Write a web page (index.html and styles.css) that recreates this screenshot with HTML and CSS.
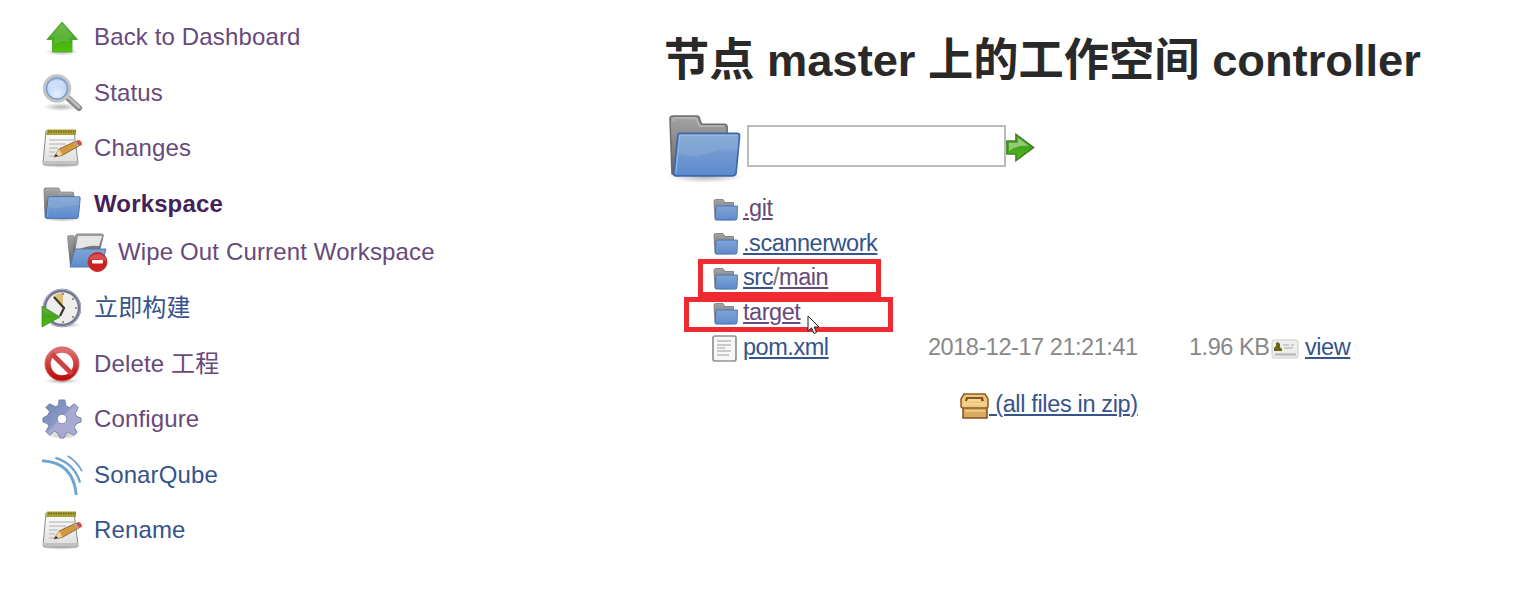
FILE: index.html
```html
<!DOCTYPE html>
<html lang="zh-CN">
<head>
<meta charset="utf-8">
<title>Workspace</title>
<link rel="stylesheet" href="styles.css">
</head>
<body>
<svg class="defs" width="0" height="0" aria-hidden="true">
  <defs>
    <linearGradient id="green" x1="0" y1="0" x2="0" y2="1"><stop offset="0" stop-color="#62b23c"/><stop offset=".5" stop-color="#43a51f"/><stop offset="1" stop-color="#4fc400"/></linearGradient>
    <linearGradient id="blue" x1="0" y1="0" x2="0" y2="1"><stop offset="0" stop-color="#7ea5d6"/><stop offset=".5" stop-color="#7199d0"/><stop offset="1" stop-color="#5c8ad0"/></linearGradient>
    <linearGradient id="grey" x1="0" y1="0" x2="0" y2="1"><stop offset="0" stop-color="#a4a4a4"/><stop offset="1" stop-color="#646464"/></linearGradient>
    <linearGradient id="paper" x1="0" y1="0" x2="0" y2="1"><stop offset="0" stop-color="#fff"/><stop offset="1" stop-color="#dcdcdc"/></linearGradient>
    <linearGradient id="red" x1="0" y1="0" x2="0" y2="1"><stop offset="0" stop-color="#dc6e6e"/><stop offset="1" stop-color="#c00c0c"/></linearGradient>
    <linearGradient id="steel" x1="0" y1="0" x2="1" y2="1"><stop offset="0" stop-color="#6e88b8"/><stop offset=".45" stop-color="#8898c4"/><stop offset=".5" stop-color="#a8aad4"/><stop offset="1" stop-color="#aaa8ce"/></linearGradient>
    <radialGradient id="lens" cx=".5" cy=".7" r=".7"><stop offset="0" stop-color="#e4f0ff"/><stop offset="1" stop-color="#a5c2ee"/></radialGradient>
    <radialGradient id="shade"><stop offset="0" stop-color="#777" stop-opacity=".55"/><stop offset="1" stop-color="#777" stop-opacity="0"/></radialGradient>
    <symbol id="folder" viewBox="0 0 76 68" preserveAspectRatio="none">
      <ellipse cx="38" cy="62" rx="38" ry="6" fill="url(#shade)"/>
      <path d="M4 59 2 5Q2 2 5 2H29Q32 2 32 5L34 10H57Q60 10 60 13V30L10 61Z" fill="url(#grey)" stroke="#6c6c6c" stroke-width="1.5"/>
      <path d="M5 7Q5 4 8 4H28L32 12H57" fill="none" stroke="#bdbdbd" stroke-width="1.2"/>
      <path d="M12 19H70Q73 19 72.500 22L69 58Q68.500 61 65 61H8Q5 61 6 57L10 21Q10 19 12 19Z" fill="url(#blue)" stroke="#3d68aa" stroke-width="1.7"/>
      <path d="M11 39C34 48 45 31 71 36L70 21H13Z" fill="#a9bfdf" opacity=".24"/>
      <path d="M8 58 12 21H70" fill="none" stroke="#9fbbe1" stroke-width="1"/>
    </symbol>
    <symbol id="folder-small" viewBox="0 0 26 24">
      <ellipse cx="13" cy="22" rx="12" ry="1.500" fill="url(#shade)"/>
      <path d="M2 21 1 3Q1 1.500 2.500 1.500H10L12 4.500H20.500V10L4 22Z" fill="url(#grey)" stroke="#747474" stroke-width=".8"/>
      <path d="M4 8H24.500L24 20.500Q24 22 22.500 22H3Q2 22 2.300 20.500L3 9Z" fill="url(#blue)" stroke="#4a73af" stroke-width=".9"/>
    </symbol>
    <symbol id="notepad" viewBox="0 0 42 40">
      <ellipse cx="20" cy="37" rx="20" ry="3" fill="url(#shade)"/>
      <path d="M5 3H33L37 35Q37 37 35 37H4Q2 37 2 35Z" fill="url(#paper)" stroke="#8b8b8b"/>
      <path d="M2 33H37V36H2Z" fill="#c2c2c2"/>
      <path d="M6 1.500H35V7H5Z" fill="#aaa039"/>
      <path d="M7 3.500H35" stroke="#756b18" stroke-width="2" stroke-dasharray="1.500 1"/>
      <path d="M8 12H33M8 16H25M8 20H17M8 24H14M8 28H14" stroke="#c5c5c5" stroke-width="1.500"/>
      <path d="M13 29 18 21 34 13.500 38 18 21 27.500Z" fill="#d29a3c" stroke="#80592b" stroke-width=".8"/>
      <path d="M13 29 18 21 21.500 27Z" fill="#ead3a0"/><path d="m13 29 2-3 2 2Z" fill="#2f2b25"/>
      <path d="m33 14 3-1.500 3 4.500-2.500 2Z" fill="#aaa"/><path d="m35 13 3-1q3 1 3 5l-3 1Z" fill="#d64e49"/>
    </symbol>
  </defs>
</svg>

<div class="page">
  <nav class="side">
    <a class="task visited"><svg class="icon" viewBox="0 0 42 40"><ellipse cx="21" cy="35" rx="17" ry="3.500" fill="url(#shade)"/><path d="M21 5 36.500 22.500H31V35H11.500V22.500H6Z" fill="url(#green)" stroke="#57a83c"/><path d="M21 7 33 20.500H28V25Q21 22 13.500 28V20.500H9Z" fill="#91cf70" opacity=".32"/></svg><span>Back to Dashboard</span></a>
    <a class="task visited"><svg class="icon" viewBox="0 0 42 40"><ellipse cx="20" cy="34" rx="18" ry="4" fill="url(#shade)"/><path d="m27 25 11 10" stroke="#888" stroke-width="6" stroke-linecap="round"/><path d="m27 24 11 10" stroke="#c0c0c0" stroke-width="3" stroke-linecap="round"/><circle cx="16" cy="15.500" r="12.500" fill="url(#lens)" stroke="#c2c5c6" stroke-width="3.500"/><circle cx="16" cy="15.500" r="10.500" fill="none" stroke="#7f9cc9" stroke-width="1.500"/><path d="M7 16Q6 7 17 7 24 8 24 13 16 11 7 16Z" fill="#dbe9ff" opacity=".5"/></svg><span>Status</span></a>
    <a class="task visited"><svg class="icon"><use href="#notepad"/></svg><span>Changes</span></a>
    <a class="task visited current"><svg class="icon folder-icon"><use href="#folder"/></svg><span>Workspace</span></a>
    <a class="task visited sub"><svg class="icon" viewBox="0 0 42 40"><path d="M1 5Q1 3 3 3H8V33H4Z" fill="url(#grey)"/><path d="M9 4Q10 2 12 2H36Q38 2 37 5L33 21H6Z" fill="url(#grey)" stroke="#858585"/><path d="M12 4H36L33 14Q21 13 9 19Z" fill="#e6e6e6"/><path d="M9 17H40L35 35H4Z" fill="url(#blue)" stroke="#4f78b0"/><circle cx="31.500" cy="30" r="9.500" fill="#cf2020" stroke="#bd3333"/><path d="M23 28Q25 22 32 22 39 22 40 29 31 26 23 28Z" fill="#e07979" opacity=".55"/><rect x="26" y="28" width="11" height="3.500" rx="1" fill="#fff"/></svg><span>Wipe Out Current Workspace</span></a>
    <a class="task"><svg class="icon" viewBox="0 0 42 40"><ellipse cx="24" cy="37" rx="17" ry="3" fill="url(#shade)"/><circle cx="21" cy="20" r="17.500" fill="#eeeeec" stroke="#747792" stroke-width="3.500"/><circle cx="21" cy="20" r="18.600" fill="none" stroke="#adb0c6" stroke-width="1"/><path d="M22 18 12 9Q16 5 22 5Z" fill="#ddc270"/><path d="m13 9 10 11-4 8" fill="none" stroke="#39362b" stroke-width="2.200"/><g fill="#777"><circle cx="22" cy="6" r="1"/><circle cx="32" cy="11" r="1"/><circle cx="35" cy="20" r="1"/><circle cx="32" cy="29" r="1"/><circle cx="22" cy="34" r="1"/></g><path d="M1 18 19 29 1 39Z" fill="url(#green)" stroke="#4a8732" stroke-width=".8"/></svg><span>立即构建</span></a>
    <a class="task visited"><svg class="icon" viewBox="0 0 42 40"><ellipse cx="21" cy="37" rx="18" ry="3" fill="url(#shade)"/><circle cx="21" cy="20" r="14" fill="#fff" stroke="url(#red)" stroke-width="5.500"/><path d="m11 10 20 20" stroke="#ce3f3f" stroke-width="5"/><circle cx="21" cy="20" r="17" fill="none" stroke="#bd3939" stroke-width=".8"/></svg><span>Delete 工程</span></a>
    <a class="task visited"><svg class="icon" viewBox="0 0 42 42"><ellipse cx="22" cy="38" rx="17" ry="4" fill="url(#shade)"/><path fill-rule="evenodd" d="M18 1H24L25 7 29 9 34 5 38 9 35 15 36 18 41 20V24L36 26 34 30 37 35 33 38 28 35 25 36 23 41H19L17 36 13 34 8 38 4 34 7 29 6 26 1 24V20L6 17 8 13 4 9 8 5 14 8 17 7ZM21 16a5 5 0 1 0 .1 0Z" fill="url(#steel)" stroke="#7783a5"/></svg><span>Configure</span></a>
    <a class="task"><svg class="icon" viewBox="0 0 42 42" fill="none" stroke="#6da4d0"><path d="M0 6C22 7 34 19 36 42" stroke-width="3"/><path d="M14 3C28 7 36 16 40 29" stroke-width="2.400"/><path d="M27 1Q37 7 42 17" stroke-width="1.900"/></svg><span>SonarQube</span></a>
    <a class="task"><svg class="icon"><use href="#notepad"/></svg><span>Rename</span></a>
  </nav>

  <main class="main">
    <h1>节点 master 上的工作空间 controller</h1>
    <div class="path">
      <svg class="big-folder"><use href="#folder"/></svg>
      <input type="text" aria-label="path">
      <svg class="go" viewBox="0 0 29 29"><path d="M1 8H10V1.500L27.500 14.500 10 27.500V21H1Z" fill="url(#green)" stroke="#47812c" stroke-width="1.700"/><path d="M3 10H12V5L23 13Q10 12 3 18Z" fill="#b7e199" opacity=".65"/></svg>
    </div>
    <div class="files">
      <div class="file"><svg class="small"><use href="#folder-small"/></svg><a class="visited">.git</a></div>
      <div class="file"><svg class="small"><use href="#folder-small"/></svg><a>.scannerwork</a></div>
      <div class="file"><svg class="small"><use href="#folder-small"/></svg><a>src</a><span>/</span><a class="visited">main</a></div>
      <div class="file"><svg class="small"><use href="#folder-small"/></svg><a class="visited">target</a></div>
      <div class="file"><svg class="doc" viewBox="0 0 25 27"><rect x="1" y="1" width="23" height="25" rx="2" fill="#f7f7f7" stroke="#929292" stroke-width="1.700"/><path d="M5 6H19M5 10H19M5 13H13M5 16H19M5 20H17" stroke="#bcbcbc" stroke-width="1.600"/></svg><a class="pom">pom.xml</a><span class="date">2018-12-17 21:21:41</span><span class="size">1.96 KB</span><svg class="card" viewBox="0 0 28 20"><rect x="1" y="1" width="26" height="18" rx="2" fill="#ededeb" stroke="#ccc"/><path d="M3 12V9L5 7V4L7 3 9 5V8L11 10V12Z" fill="#6c6518"/><path d="M12 6H18M20 6H23M13 9H22" stroke="#aaa" stroke-width="1.200"/><path d="M4 15.500H25" stroke="#bbb" stroke-width="2.500"/></svg><a>view</a></div>
    </div>
    <div class="zip"><svg class="box" viewBox="0 0 29 26"><path d="M3 12H27V25H3Z" fill="#dcaa5e" stroke="#80501a" stroke-width="1.500"/><path d="M4 1H25L28 6V13Q28 15 26 15H3Q1 15 1 13V6Z" fill="#efc77f" stroke="#8c5d20" stroke-width="1.500"/><path d="M6 4H23L24 8H5Z" fill="#86561c"/><path d="M8 6H21V8H7Z" fill="#f2d69c"/><path d="M3 11H26M5 18H25" stroke="#f8dfab" stroke-width="1.200"/></svg><a>&nbsp;(all files in zip)</a></div>
    <div class="mark mark-src"></div>
    <div class="mark mark-target"></div>
    <svg class="cursor" viewBox="0 0 13 20"><path d="M1 1V16L4.500 12.800 7 18.500 9.500 17.400 7.200 12H12Z" fill="#fff" stroke="#222"/></svg>
  </main>
</div>
</body>
</html>
```

FILE: styles.css
```css
* { box-sizing: border-box; }
body {
  margin: 0;
  background: #fff;
  color: #777;
  font-family: "Liberation Sans", "Noto Sans CJK SC", sans-serif;
  font-size: 24px;
  line-height: 32px;
}
.defs { position: absolute; }
.page { display: flex; width: 1514px; height: 596px; overflow: hidden; }
.side { width: 665px; padding: 17px 0 0 41px; letter-spacing: .14px; }
.task {
  display: flex;
  align-items: center;
  width: max-content;
  height: 40px;
  margin-bottom: 15.5px;
  color: #36538a;
  white-space: nowrap;
}
.icon { width: 42px; height: 40px; margin-right: 11px; flex: none; overflow: visible; }
.folder-icon { height: 35px; width: 39px; margin: 2px 12px 0 2px; }
.visited { color: #67497a; }
.current { color: #432258; font-weight: bold; margin-bottom: 8.5px; }
.sub { margin-left: 25px; margin-bottom: 16px; }
.sub .icon { margin-right: 10px; }
.main { position: relative; width: 849px; padding-top: 28px; }
h1 {
  margin: 0 0 0 -1px;
  height: 66px;
  color: #292929;
  font-size: 45.25px;
  line-height: 66px;
  white-space: nowrap;
}
.path { display: flex; align-items: center; height: 68px; margin: 19px 0 0 3px; }
.big-folder { width: 75px; height: 69px; margin: 2px 4px 0 0; }
.path input { width: 259px; height: 42px; margin-top: -2px; padding: 0; border: 2px solid #bbb; background: #fff; }
.go { width: 29px; height: 29px; }
.files { padding: 10px 0 0 47px; letter-spacing: -.45px; font-size: 23.5px; }
.file { display: flex; align-items: center; height: 34.6px; white-space: nowrap; }
.small { width: 26px; height: 24px; margin: 3px 4px 0 1px; }
.doc { width: 25px; height: 27px; margin: 3px 6px 0 0; }
.file a, .zip a { text-decoration: underline; text-decoration-thickness: 2px; text-underline-offset: 2px; }
.file a:not(.visited), .zip a { color: #36538a; }
.pom { width: 85px; }
.date { width: 210px; margin-left: 100px; color: #888; }
.size { width: 80px; margin-left: 51px; color: #888; }
.card { width: 28px; height: 20px; margin: 4px 6px 0 2px; }
.zip { display: flex; align-items: center; height: 34px; margin: 23px 0 0 295px; font-size: 23.5px; letter-spacing: -.35px; white-space: nowrap; }
.box { width: 29px; height: 26px; margin-top: 4px; }
.mark { position: absolute; border: 5px solid #ed2b31; }
.mark-src { left: 33px; top: 259px; width: 183px; height: 38px; }
.mark-target { left: 19px; top: 297px; width: 209px; height: 35px; }
.cursor { position: absolute; left: 142px; top: 315px; width: 13px; height: 20px; }
```
